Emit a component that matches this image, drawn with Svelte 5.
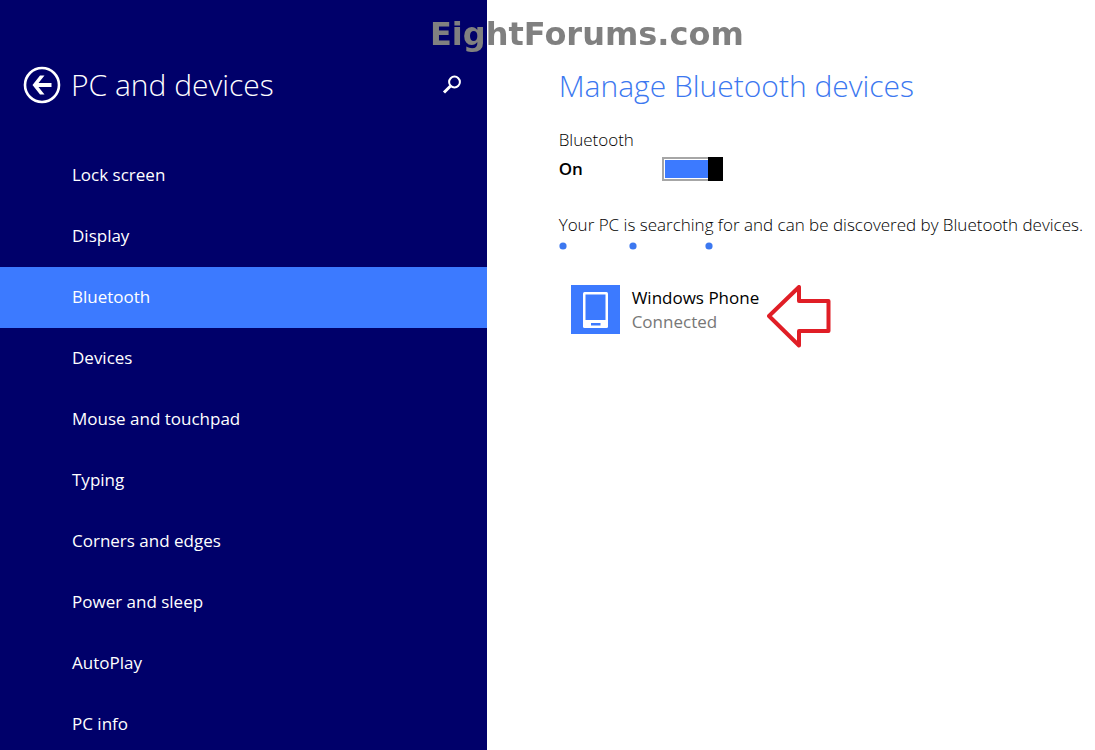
<script>
    const pages = [
        "Lock screen",
        "Display",
        "Bluetooth",
        "Devices",
        "Mouse and touchpad",
        "Typing",
        "Corners and edges",
        "Power and sleep",
        "AutoPlay",
        "PC info",
    ];

    let current = $state("Bluetooth");
    let enabled = $state(true);
</script>

<div class="settings">
    <aside class="sidebar">
        <header class="sidebarHeader">
            <button class="iconButton" aria-label="Back">
                <svg width="38" height="38" viewBox="0 0 38 38">
                    <circle cx="19" cy="19" r="17" fill="none" stroke="#fff" stroke-width="2.6" />
                    <path d="M9.500 19L17 9.500H21.500L15.500 17H28.500V21H15.500L21.500 28.500H17Z" fill="#fff" />
                </svg>
            </button>
            <h1 class="title">PC and devices</h1>
            <button class="iconButton" aria-label="Search">
                <svg width="20" height="20" viewBox="0 0 20 20" fill="none" stroke="#fff">
                    <circle cx="12.500" cy="7" r="5.400" stroke-width="2" />
                    <path d="M8.500 11L2 17.500" stroke-width="3" />
                </svg>
            </button>
        </header>
        <nav>
            <ul class="pages">
                {#each pages as page}
                    <li>
                        <button
                            class="page"
                            class:selected={page === current}
                            onclick={() => (current = page)}
                        >
                            {page}
                        </button>
                    </li>
                {/each}
            </ul>
        </nav>
    </aside>

    <main class="content">
        <h2 class="title">Manage Bluetooth devices</h2>

        <label class="caption" for="bluetooth">Bluetooth</label>
        <div class="toggleRow">
            <span class="state">{enabled ? "On" : "Off"}</span>
            <input class="toggle" id="bluetooth" type="checkbox" bind:checked={enabled} />
        </div>

        <p class="status">Your PC is searching for and can be discovered by Bluetooth devices.</p>
        <svg class="progress" width="160" height="8" fill="#3c78f0">
            <circle cx="4" cy="4" r="3.600" />
            <circle cx="74" cy="4" r="3.600" />
            <circle cx="150" cy="4" r="3.600" />
        </svg>

        <div class="device">
            <svg width="49" height="49" viewBox="0 0 49 49">
                <path d="M0 0H49V49H0Z" fill="#3c7aff" />
                <rect x="12" y="7" width="25" height="36" rx="1.500" fill="#fff" />
                <path d="M14.500 9.500H34.500V35H14.500ZM20 38H29.500V40.500H20Z" fill="#3c7aff" />
            </svg>
            <div class="deviceText">
                <div class="deviceName">Windows Phone</div>
                <div class="deviceState">Connected</div>
            </div>
            <svg width="64" height="64" viewBox="0 0 64 64">
                <path
                    d="M2 31L32 2V16H61.500V46H32V60.500Z"
                    fill="none"
                    stroke="#e01e26"
                    stroke-width="4"
                    stroke-linejoin="round"
                />
            </svg>
        </div>
    </main>

    <div class="watermark">EightForums.com</div>
</div>

<style>
    :global(body) {
        background: #fff;
    }

    .settings {
        position: relative;
        display: grid;
        grid-template-columns: minmax(0, 4fr) minmax(0, 5fr);
        height: 100vh;
        font-family: "Open Sans", sans-serif;
        font-size: 17px;
        line-height: 24px;
        color: #000;
    }

    .sidebar {
        background: #00006a;
        color: #fff;
        overflow-y: auto;
        scrollbar-width: none;
    }

    .sidebarHeader {
        display: flex;
        align-items: center;
        gap: 10px;
        padding: 65px 25px 40px 23px;
    }

    .sidebarHeader .title {
        flex: 1;
    }

    .title {
        margin: 0;
        font-size: 30px;
        font-weight: 300;
        line-height: 40px;
        white-space: nowrap;
    }

    .iconButton {
        display: flex;
        padding: 0;
        border: none;
        background: none;
    }

    .pages {
        margin: 0;
        padding: 0;
        list-style: none;
    }

    .page {
        display: block;
        width: 100%;
        height: 61px;
        padding: 0 72px 2px;
        border: none;
        background: none;
        color: inherit;
        font: inherit;
        text-align: left;
    }

    .page.selected {
        background: #3c7aff;
    }

    .content {
        padding: 66px 0 0 72px;
    }

    .content .title {
        color: #3c78f0;
    }

    .caption {
        display: block;
        margin-top: 22px;
        font-weight: 300;
    }

    .toggleRow {
        display: flex;
        align-items: center;
        margin-top: 5px;
    }

    .state {
        width: 103px;
        font-weight: 600;
    }

    .toggle {
        appearance: none;
        width: 61px;
        height: 24px;
        margin: 0;
        padding: 1px;
        border: 2px solid #a6a6a6;
        background:
            linear-gradient(#a6a6a6, #a6a6a6) content-box,
            #fff;
    }

    .toggle:checked {
        background:
            linear-gradient(#3c7aff, #3c7aff) content-box,
            #fff;
    }

    /* thumb, drawn over the track border */
    .toggle::before {
        content: "";
        display: block;
        width: 15px;
        height: 24px;
        margin: -3px;
        background: #000;
    }

    .toggle:checked::before {
        margin-left: auto;
    }

    .status {
        margin: 32px 0 5px;
        font-weight: 300;
    }

    .progress {
        display: block;
    }

    .device {
        display: flex;
        align-items: flex-start;
        margin: 35px 0 0 12px;
        gap: 12px;
    }

    .deviceText {
        padding-top: 1px;
    }

    .deviceName {
        white-space: nowrap;
    }

    .deviceState {
        color: #777;
    }

    .device svg:last-child {
        margin-left: -4px;
    }

    .watermark {
        position: absolute;
        top: 14px;
        left: 430px;
        color: #808080;
        font-family: "DejaVu Sans", sans-serif;
        font-size: 32px;
        font-weight: 700;
        line-height: 40px;
    }
</style>
